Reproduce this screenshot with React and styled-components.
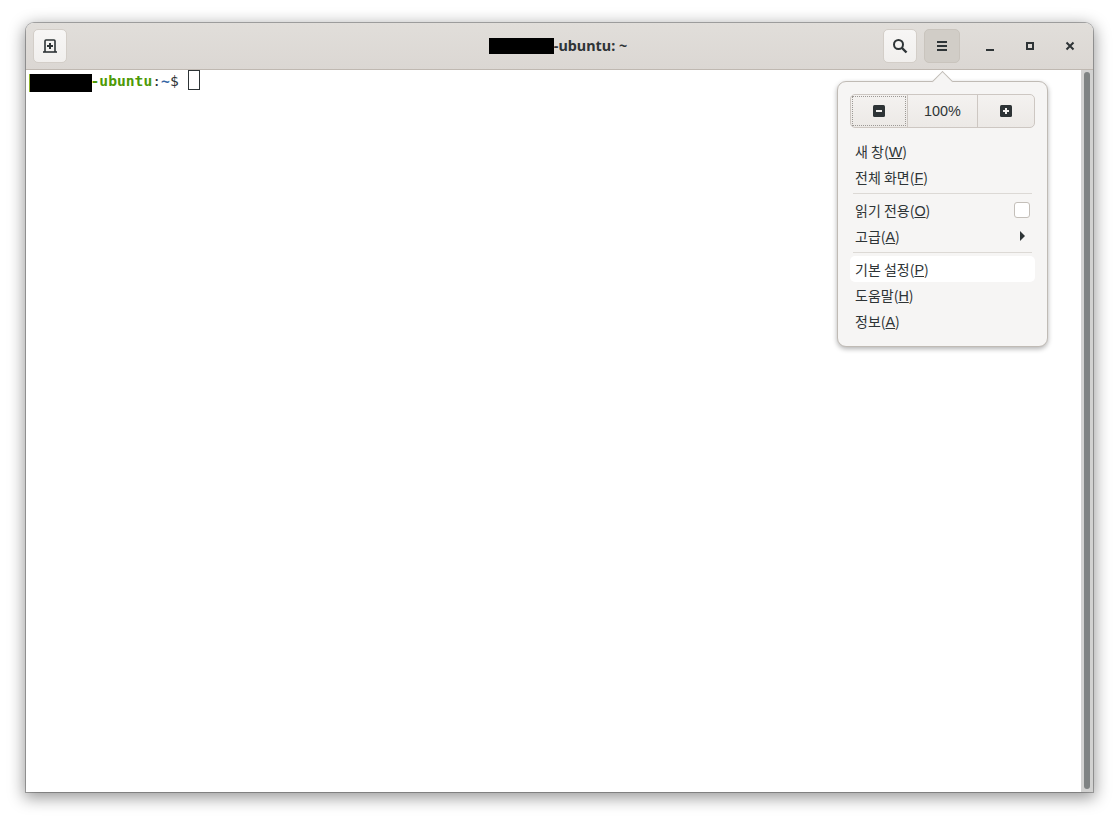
import React from "react";
import styled, { createGlobalStyle } from "styled-components";

const GlobalStyle = createGlobalStyle`
  html, body {
    margin: 0;
    padding: 0;
    background: #ffffff;
  }
`;

const Desktop = styled.div`
  width: 1119px;
  height: 821px;
  padding: 23px 26px 29px 26px;
  box-sizing: border-box;
  overflow: hidden;
`;
const Window = styled.div`
  position: relative;
  display: flex;
  flex-direction: column;
  height: 100%;
  border-radius: 8px 8px 0 0;
  box-shadow: 0 0 0 1px rgba(0, 0, 0, 0.28), 0 4px 16px 2px rgba(0, 0, 0, 0.4);
`;
const HeaderBar = styled.header`
  display: grid;
  grid-template-columns: 1fr auto 1fr;
  align-items: center;
  height: 47px;
  padding: 0 3px 0 7px;
  box-sizing: border-box;
  background: linear-gradient(#e1deda, #dbd7d3);
  border-bottom: 1px solid #bfb8b1;
  border-radius: 8px 8px 0 0;
`;
const HeaderSide = styled.div`
  display: flex;
  align-items: center;
  justify-content: ${(p) => (p.$end ? "flex-end" : "flex-start")};
`;
const HeaderButton = styled.button`
  display: flex;
  align-items: center;
  justify-content: center;
  width: ${(p) => p.$width || 34}px;
  height: 34px;
  margin-left: ${(p) => p.$gap || 0}px;
  padding: 0;
  color: #2e3436;
  background: ${(p) => (p.$active ? "#d1cdc7" : "linear-gradient(#f7f6f5, #f1efed)")};
  border: 1px solid ${(p) => (p.$active ? "#c9c4bd" : "#d3cec8")};
  border-radius: 5px;
`;
const WindowButton = styled.button`
  display: flex;
  align-items: center;
  justify-content: center;
  width: 40px;
  height: 34px;
  padding: 0;
  color: #2e3436;
  background: none;
  border: 0;
`;
const WindowButtons = styled.div`
  display: flex;
  margin-left: 10px;
`;
const Title = styled.div`
  display: flex;
  align-items: center;
  margin-right: 7px;
  padding-bottom: 2px;
  font: bold 14.4px "Noto Sans", sans-serif;
  color: #2e3436;
`;
const TitleRedaction = styled.span`
  width: 65px;
  height: 16px;
  margin-top: 2px;
  background: #000000;
`;

const Body = styled.div`
  flex: 1;
  display: flex;
  min-height: 0;
  background: #ffffff;
`;
const Terminal = styled.main`
  flex: 1;
  padding: 1px 0 0 2px;
  font: 14.67px/20px "DejaVu Sans Mono", monospace;
  color: #2e3436;
`;
const PromptLine = styled.div`
  display: flex;
  align-items: center;
  height: 20px;
`;
const PromptRedaction = styled.span`
  width: 62px;
  height: 18px;
  margin: 4px -1.5px 0 1px;
  background: #000000;
  border-left: 1px solid #8fb32a;
  box-sizing: content-box;
`;
const Host = styled.span`
  color: #4e9a06;
  font-weight: bold;
`;
const Path = styled.span`
  color: #3465a4;
  font-weight: bold;
`;
const Cursor = styled.span`
  width: 10px;
  height: 18px;
  margin: 0 0 2px 9.5px;
  border: 1px solid #2e3436;
`;
const ScrollTrack = styled.div`
  display: flex;
  width: 12px;
  padding: 2px 3px 3px 3px;
  box-sizing: border-box;
  background: #d2d2d1;
`;
const ScrollThumb = styled.div`
  flex: 1;
  background: #7f8383;
  border-radius: 3px;
`;

const Popover = styled.div`
  position: absolute;
  left: 811px;
  top: 58px;
  width: 211px;
  height: 266px;
  padding: 12px;
  box-sizing: border-box;
  background: #f6f5f4;
  border: 1px solid #c0bbb5;
  border-radius: 9px;
  box-shadow: 0 2px 5px rgba(0, 0, 0, 0.3);
  font: 14px "Noto Sans CJK KR", sans-serif;
  color: #2e3436;
  &::before {
    content: "";
    position: absolute;
    left: 97px;
    top: -8px;
    width: 15px;
    height: 15px;
    background: #f6f5f4;
    border-left: 1px solid #c0bbb5;
    border-top: 1px solid #c0bbb5;
    box-sizing: border-box;
    transform: rotate(45deg);
  }
`;
const ZoomGroup = styled.div`
  position: relative;
  display: flex;
  height: 34px;
  margin: 0 0 10px 0;
  background: linear-gradient(#f4f2f0, #ece9e6);
  border: 1px solid #cdc7c2;
  border-radius: 5px;
  box-sizing: border-box;
`;
const ZoomButton = styled.div`
  display: flex;
  align-items: center;
  justify-content: center;
  width: ${(p) => p.$width}px;
  color: #2e3436;
  border-left: ${(p) => (p.$first ? "0" : "1px solid #cdc7c2")};
  box-sizing: border-box;
  outline: ${(p) => (p.$focus ? "1px dotted #9c9995" : "none")};
  outline-offset: -2px;
  font: 14.4px "Liberation Sans", sans-serif;
`;
const MenuItem = styled.div`
  display: flex;
  align-items: center;
  justify-content: space-between;
  height: 26px;
  padding: 0 5px;
  box-sizing: border-box;
  border-radius: 5px;
  background: ${(p) => (p.$hover ? "#ffffff" : "transparent")};
  white-space: pre;
  u {
    font-family: "Liberation Sans", sans-serif;
    font-size: 14.4px;
  }
`;
const Separator = styled.div`
  height: 1px;
  margin: 3px;
  background: #dcd9d5;
`;
const CheckBox = styled.span`
  width: 16px;
  height: 16px;
  background: #ffffff;
  border: 1px solid #c4bfb9;
  border-radius: 3px;
  box-sizing: border-box;
`;
const SubmenuArrow = styled.span`
  width: 0;
  height: 0;
  margin-right: 5px;
  border-left: 5px solid #2e3436;
  border-top: 5px solid transparent;
  border-bottom: 5px solid transparent;
`;

const NewTabIcon = () => (
  <svg width="16" height="16" viewBox="0 0 16 16">
    <path d="M3 14V3a1 1 0 0 1 1-1h8a1 1 0 0 1 1 1v11" fill="none" stroke="currentColor" strokeWidth="1.6" />
    <path d="M1 14h14" stroke="currentColor" strokeWidth="1.6" />
    <path d="M8 5v6M5 8h6" stroke="currentColor" strokeWidth="2" />
  </svg>
);
const SearchIcon = () => (
  <svg width="16" height="16" viewBox="0 0 16 16" fill="none" stroke="currentColor">
    <circle cx="6.5" cy="6.5" r="4.5" strokeWidth="2" />
    <path d="M10 10l4.5 4.5" strokeWidth="2.4" />
  </svg>
);
const MenuIcon = () => (
  <svg width="16" height="16" viewBox="0 0 16 16" fill="currentColor">
    <rect x="3" y="3" width="10" height="2" />
    <rect x="3" y="7" width="10" height="2" />
    <rect x="3" y="11" width="10" height="2" />
  </svg>
);
const MinimizeIcon = () => (
  <svg width="16" height="16" viewBox="0 0 16 16" fill="currentColor">
    <rect x="4" y="11" width="8" height="2" />
  </svg>
);
const MaximizeIcon = () => (
  <svg width="16" height="16" viewBox="0 0 16 16" fill="none" stroke="currentColor" strokeWidth="2">
    <rect x="5" y="5" width="6" height="6" />
  </svg>
);
const CloseIcon = () => (
  <svg width="16" height="16" viewBox="0 0 16 16" fill="none" stroke="currentColor" strokeWidth="2">
    <path d="M4.5 4.5l7 7M11.5 4.5l-7 7" />
  </svg>
);
const ZoomIcon = ({ plus }) => (
  <svg width="12" height="12" viewBox="0 0 12 12">
    <rect width="12" height="12" rx="1.5" fill="currentColor" />
    <path d={plus ? "M3 6h6M6 3v6" : "M3 6h6"} stroke="#f4f2f0" strokeWidth="2" />
  </svg>
);

export default function App() {
  return (
    <>
      <GlobalStyle />
      <Desktop>
        <Window>
          <HeaderBar>
            <HeaderSide>
              <HeaderButton><NewTabIcon /></HeaderButton>
            </HeaderSide>
            <Title>
              <TitleRedaction />-ubuntu: ~
            </Title>
            <HeaderSide $end>
              <HeaderButton><SearchIcon /></HeaderButton>
              <HeaderButton $active $width={36} $gap={7}><MenuIcon /></HeaderButton>
              <WindowButtons>
                <WindowButton><MinimizeIcon /></WindowButton>
                <WindowButton><MaximizeIcon /></WindowButton>
                <WindowButton><CloseIcon /></WindowButton>
              </WindowButtons>
            </HeaderSide>
          </HeaderBar>
          <Body>
            <Terminal>
              <PromptLine>
                <PromptRedaction />
                <Host>-ubuntu</Host>:<Path>~</Path>$
                <Cursor />
              </PromptLine>
            </Terminal>
            <ScrollTrack><ScrollThumb /></ScrollTrack>
          </Body>
          <Popover>
            <ZoomGroup>
              <ZoomButton $first $focus $width={56}><ZoomIcon /></ZoomButton>
              <ZoomButton $width={71}>100%</ZoomButton>
              <ZoomButton $width={57}><ZoomIcon plus /></ZoomButton>
            </ZoomGroup>
            <MenuItem><span>새 창(<u>W</u>)</span></MenuItem>
            <MenuItem><span>전체 화면(<u>F</u>)</span></MenuItem>
            <Separator />
            <MenuItem><span>읽기 전용(<u>O</u>)</span><CheckBox /></MenuItem>
            <MenuItem><span>고급(<u>A</u>)</span><SubmenuArrow /></MenuItem>
            <Separator />
            <MenuItem $hover><span>기본 설정(<u>P</u>)</span></MenuItem>
            <MenuItem><span>도움말(<u>H</u>)</span></MenuItem>
            <MenuItem><span>정보(<u>A</u>)</span></MenuItem>
          </Popover>
        </Window>
      </Desktop>
    </>
  );
}
